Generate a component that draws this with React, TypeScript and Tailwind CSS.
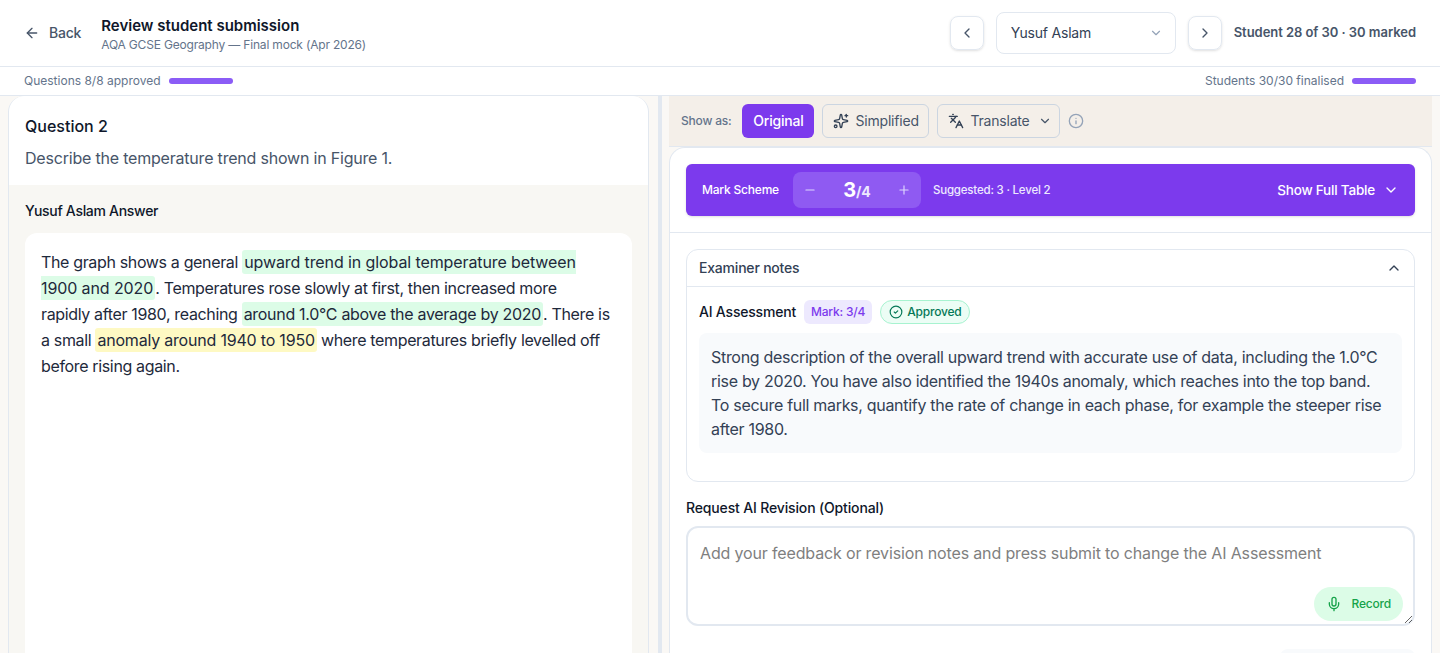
import { ArrowLeft, ChevronDown, ChevronLeft, ChevronRight, ChevronUp, CircleCheck, Info, Languages, Mic, Minus, Plus, Sparkles } from "lucide-react";

function Progress({ label }: { label: string }) {
  return (
    <div className="flex items-center gap-2">
      <span className="text-[12px] leading-4 tracking-normal text-[#64748b]">{label}</span>
      <div className="h-1.5 w-16 rounded-full bg-[#8b5cf6]" />
    </div>
  );
}

function Highlight({ className, children }: { className: string; children: string }) {
  return <mark className={`rounded-[3px] px-0.5 py-[2px] text-[#1e293b] ${className}`}>{children}</mark>;
}

export default function App() {
  return (
    <div className="flex h-[653px] flex-col overflow-hidden bg-white font-['Inter',sans-serif] tracking-[-0.2px] text-[#0f172a]">
      {/* Header */}
      <header className="flex h-[67px] shrink-0 items-center justify-between border-b border-[#e2e8f0] px-6">
        <div className="flex items-center gap-5">
          <button className="flex items-center gap-[9px] text-sm font-medium text-[#475569]">
            <ArrowLeft className="h-4 w-4" />
            Back
          </button>
          <div className="pt-[3px]">
            <div className="text-[15px] font-semibold leading-5 tracking-normal">Review student submission</div>
            <div className="mt-[1px] text-[12px] leading-4 tracking-[-0.18px] text-[#64748b]">AQA GCSE Geography — Final mock (Apr 2026)</div>
          </div>
        </div>
        <div className="flex items-center">
          <button className="flex h-[34px] w-[34px] items-center justify-center rounded-lg border border-[#e2e8f0] text-[#475569] shadow-sm">
            <ChevronLeft className="h-4 w-4" />
          </button>
          <div className="ml-3 flex h-[42px] w-[180px] items-center justify-between rounded-lg border border-[#e2e8f0] pl-[14px] pr-3 text-sm text-[#334155]">
            Yusuf Aslam
            <ChevronDown className="h-3.5 w-3.5 text-[#94a3b8]" />
          </div>
          <button className="ml-3 flex h-[34px] w-[34px] items-center justify-center rounded-lg border border-[#e2e8f0] text-[#475569] shadow-sm">
            <ChevronRight className="h-4 w-4" />
          </button>
          <span className="ml-3 text-[13px] font-semibold tracking-[-0.05px] text-[#475569]">Student 28 of 30 · 30 marked</span>
        </div>
      </header>

      {/* Progress row */}
      <div className="flex h-[29px] shrink-0 items-center justify-between border-b border-[#e2e8f0] px-6">
        <Progress label="Questions 8/8 approved" />
        <Progress label="Students 30/30 finalised" />
      </div>

      <div className="flex min-h-0 flex-1 bg-[#faf8f5]">
        {/* Question panel */}
        <div className="flex w-[658px] shrink-0 pl-2 pr-[9px]">
          <div className="flex w-full flex-col overflow-hidden rounded-t-2xl border-x border-[#e2e8f0] bg-white">
            <div className="px-4 pb-[15px] pt-5">
              <h2 className="text-base font-medium leading-5 tracking-normal">Question 2</h2>
              <p className="mt-[10px] text-base leading-6 text-[#475569]">Describe the temperature trend shown in Figure 1.</p>
            </div>
            <div className="flex-1 bg-[#f8f7f3] px-4 pt-4">
              <div className="text-[14px] font-medium leading-5 tracking-[-0.3px]">Yusuf Aslam Answer</div>
              <div className="mt-3 h-full rounded-t-xl bg-white pl-4 pr-[19px] pt-4 text-base leading-[26px] tracking-[-0.35px] text-[#1e293b]">
                The graph shows a general <Highlight className="bg-[#dcfce7] tracking-[-0.1px]">upward trend in global temperature between 1900 and 2020</Highlight>. Temperatures rose slowly at first, then increased more<br />
                rapidly after 1980, reaching <Highlight className="bg-[#dcfce7] tracking-[-0.3px]">around 1.0°C above the average by 2020</Highlight>. There is a small <Highlight className="bg-[#fef9c3] tracking-[-0.2px]">anomaly around 1940 to 1950</Highlight> where temperatures briefly levelled off before rising again.
              </div>
            </div>
          </div>
        </div>

        {/* Divider */}
        <div className="w-1 shrink-0 bg-[#e2e8f0]" />

        {/* Marking panel */}
        <div className="ml-[7px] flex w-[763px] shrink-0 flex-col">
          <div className="flex h-[51px] shrink-0 items-center border-b border-[#e2e8f0] bg-[#f4efe9] px-3">
            <span className="mr-[11px] text-[12px] font-medium text-[#64748b]">Show as:</span>
            <button className="h-[34px] w-[72px] rounded-md bg-[#7c3aed] text-sm font-medium text-white">Original</button>
            <button className="ml-2 flex h-[34px] w-[107px] items-center gap-1.5 rounded-md border border-[#cbd5e1] pl-[10px] text-sm text-[#475569]">
              <Sparkles className="h-4 w-4 text-[#334155]" />
              Simplified
            </button>
            <button className="ml-2 flex h-[34px] w-[123px] items-center gap-1.5 rounded-md border border-[#cbd5e1] pl-[10px] text-sm text-[#475569]">
              <Languages className="h-4 w-4 text-[#334155]" />
              Translate
              <ChevronDown className="ml-0.5 h-3.5 w-3.5" />
            </button>
            <Info className="ml-2 h-4 w-4 text-[#94a3b8]" />
          </div>

          <div className="min-h-0 flex-1 overflow-hidden rounded-t-2xl border-x border-t border-[#e2e8f0] bg-white">
            <div className="border-b border-[#e2e8f0] px-4 py-4">
              <div className="flex h-[52px] items-center rounded-md bg-[#7c3aed] pl-4 pr-4 text-white shadow-sm">
                <span className="text-[12px] font-medium">Mark Scheme</span>
                <div className="ml-[14px] flex h-9 w-32 items-center justify-between rounded-lg bg-[#8f5af2] px-[10px]">
                  <Minus className="h-3.5 w-3.5 text-[#ddd6fe]" />
                  <span className="font-bold"><span className="text-[20px]">3</span><span className="text-[14px] text-[#ede9fe]">/4</span></span>
                  <Plus className="h-3.5 w-3.5 text-[#ddd6fe]" />
                </div>
                <span className="ml-3 pt-[1px] text-[11.5px] font-medium text-[#ede9fe]">Suggested: 3 · Level 2</span>
                <button className="ml-auto flex items-center gap-2 text-[13.5px] font-medium">
                  Show Full Table
                  <ChevronDown className="h-4 w-4" />
                </button>
              </div>
            </div>

            <div className="px-4 pt-4">
              <div className="rounded-xl border border-[#e2e8f0] pb-7">
                <div className="flex h-[37px] items-center justify-between border-b border-[#e2e8f0] px-3 pb-[1px] text-[14px] font-medium text-[#334155]">
                  Examiner notes
                  <ChevronUp className="h-4 w-4" />
                </div>
                <div className="flex h-[46px] items-center px-3 pt-[4px]">
                  <span className="pb-[1px] text-[14px] font-medium">AI Assessment</span>
                  <span className="ml-2 flex h-6 items-center rounded-md bg-[#ede9fe] px-[7px] text-[12px] font-medium text-[#7c3aed]">Mark: 3/4</span>
                  <span className="ml-2 flex h-6 items-center gap-1 rounded-full border border-[#a7f3d0] bg-[#ecfdf5] px-2 text-[12px] font-medium text-[#047857]">
                    <CircleCheck className="h-3.5 w-3.5" />
                    Approved
                  </span>
                </div>
                <div className="mx-3 rounded-lg bg-[#f8fafc] px-3 py-3 text-base leading-6 tracking-[-0.3px] text-[#334155]">
                  Strong description of the overall upward trend with accurate use of data, including the 1.0°C rise by 2020. You have also identified the 1940s anomaly, which reaches into the top band.<br />
                  To secure full marks, quantify the rate of change in each phase, for example the steeper rise after 1980.
                </div>
              </div>

              <label className="mt-4 block text-[14px] font-medium leading-5 tracking-[-0.15px]">Request AI Revision (Optional)</label>
              <div className="relative mt-2">
                <textarea
                  className="block h-[100px] w-full rounded-xl border-2 border-[#e2e8f0] px-3 pb-[13px] pt-[15px] text-base leading-5 tracking-[-0.15px] outline-none placeholder:text-[#7f7f7f]"
                  placeholder="Add your feedback or revision notes and press submit to change the AI Assessment"
                />
                <button className="absolute bottom-[5px] right-[12px] flex h-[34px] items-center gap-[10px] rounded-full bg-[#dcfce7] px-3 text-[12px] font-medium text-[#16a34a]">
                  <Mic className="h-4 w-4" />
                  Record
                </button>
              </div>
              <div className="mt-[23px] flex justify-end">
                <div className="h-9 w-[135px] rounded-lg bg-[#f8fafc]" />
              </div>
            </div>
          </div>
        </div>
      </div>
    </div>
  );
}
